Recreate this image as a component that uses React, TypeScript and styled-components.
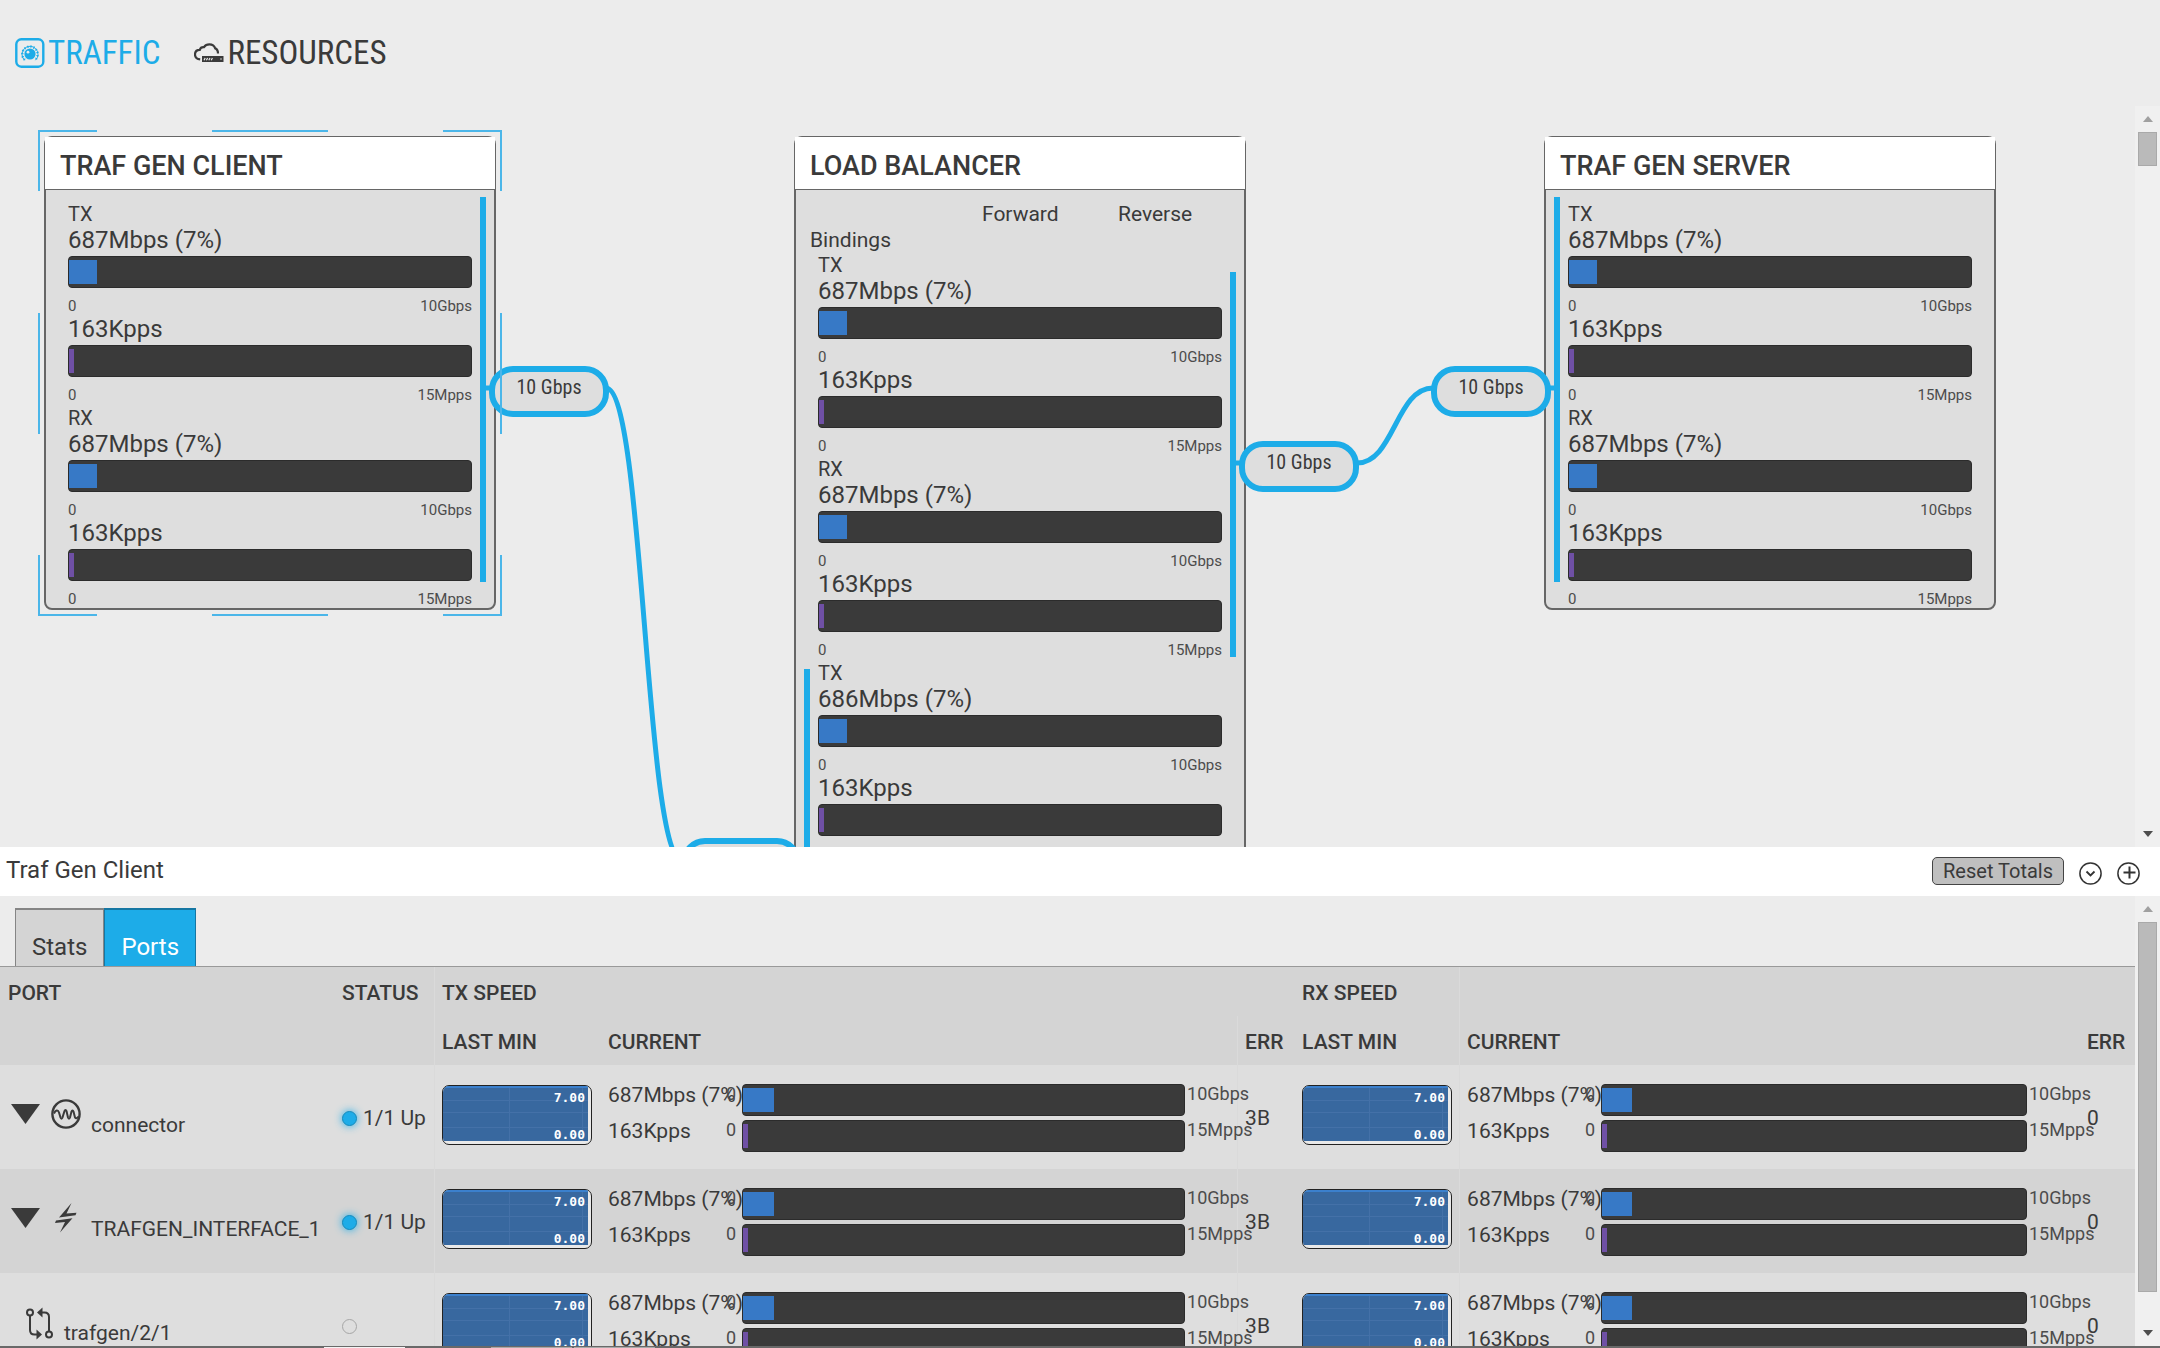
import React from "react";
import styled, { createGlobalStyle, css } from "styled-components";

const color = {
  ink: "#3a3a3a",
  blue: "#1dace8",
  page: "#ececec",
  card: "#dedede",
  band: "#d4d4d4",
  bar: "#3a3a3a",
  bits: "#3779c6",
  packets: "#6f50a5",
};

const GlobalStyle = createGlobalStyle`
  *, *::before, *::after { box-sizing: border-box; }
  body { margin: 0; background: ${color.page}; color: ${color.ink}; font-family: Roboto, "Liberation Sans", sans-serif; }
  button { font-family: inherit; color: inherit; }
`;

const Page = styled.div`
  display: flex;
  flex-direction: column;
  height: 100vh;
  overflow: hidden;
`;

/* ---------- navigation ---------- */

const MainNav = styled.nav`
  display: flex;
  align-items: center;
  gap: 34px;
  flex: none;
  height: 106px;
  padding-left: 15px;
`;

const NavLink = styled.a<{ $active?: boolean }>`
  display: flex;
  align-items: center;
  gap: 3px;
  font-family: "Roboto Condensed", Roboto, sans-serif;
  font-size: 33px;
  line-height: 40px;
  text-decoration: none;
  text-transform: uppercase;
  color: ${p => (p.$active ? color.blue : color.ink)};
  svg { display: block; }
`;

function TrafficIcon() {
  return (
    <svg width="30" height="30" viewBox="0 0 30 30" fill="none" aria-hidden="true">
      <rect x="1.3" y="1.3" width="27" height="27.4" rx="5" stroke="currentColor" strokeWidth="2.4" />
      <circle cx="15" cy="16" r="5.6" fill="currentColor" />
      <circle cx="13" cy="14.2" r="1.4" fill="#ececec" />
      <path d="M9.6 22.2A8 8 0 1 1 20.4 22.2" stroke="currentColor" strokeWidth="1" />
      <path d="M9.8 21.9A7.7 7.7 0 1 1 20.2 21.9" stroke="currentColor" strokeWidth="2.4" strokeDasharray="1.2 1.9" />
    </svg>
  );
}

function ResourcesIcon() {
  return (
    <svg width="30" height="20" viewBox="0 0 30 20" fill="none" aria-hidden="true">
      <path d="M6.2 16.4C2.6 16 1 14 1 11.4C1 8.6 3 6.8 5.8 6.8C6.4 4.8 8 4 10 4.2C11.4 2 13.4 1.4 15.4 1.4C18.6 1.4 20.4 3 21.2 5.4C23 6 24 7.6 24 10.6" stroke="currentColor" strokeWidth="2.2" />
      <rect x="8" y="13" width="21.5" height="6" fill="currentColor" />
      <path d="M10 17.2l1.2-2.2M12.4 17.2l1.2-2.2M14.8 17.2l1.2-2.2M17.2 17.2l1.2-2.2M26.2 16h1.6" stroke="#ececec" strokeWidth="1.2" />
    </svg>
  );
}

/* ---------- scroll gutter ---------- */

const Gutter = styled.div`
  display: flex;
  flex-direction: column;
  align-items: center;
  flex: none;
  width: 25px;
  background: #f0f0f0;
`;

const GutterArrow = styled.div<{ $down?: boolean; $tone: string }>`
  display: flex;
  align-items: center;
  justify-content: center;
  flex: none;
  height: 26px;
  &::before {
    content: "";
    border: 5px solid transparent;
    ${p =>
      p.$down
        ? css`border-top: 6px solid ${p.$tone}; border-bottom: 0;`
        : css`border-bottom: 6px solid ${p.$tone}; border-top: 0;`}
  }
`;

const GutterTrack = styled.div`
  flex: 1;
  min-height: 0;
  width: 19px;
`;

const GutterThumb = styled.div<{ $size: number }>`
  height: ${p => p.$size}%;
  background: #bababa;
  border: 1px solid #a9a9a9;
`;

function ScrollGutter({ size }: { size: number }) {
  return (
    <Gutter aria-hidden="true">
      <GutterArrow $tone="#a0a0a0" />
      <GutterTrack>
        <GutterThumb $size={size} />
      </GutterTrack>
      <GutterArrow $down $tone="#4d4d4d" />
    </Gutter>
  );
}

/* ---------- meters ---------- */

const BarTrack = styled.div`
  height: 32px;
  padding: 3px 0;
  border: 1px solid #2b2b2b;
  border-radius: 4px;
  background: ${color.bar};
`;

const BarFill = styled.div<{ $kind: Kind }>`
  height: 100%;
  min-width: 5px;
  background: ${p => color[p.$kind]};
`;

type Kind = "bits" | "packets";

function Bar({ kind }: { kind: Kind }) {
  const value = kind === "bits" ? 7 : 1;
  return (
    <BarTrack role="progressbar" aria-valuenow={value} aria-valuemin={0} aria-valuemax={100} aria-label={kind}>
      <BarFill $kind={kind} style={{ width: `${value}%` }} />
    </BarTrack>
  );
}

const Direction = styled.div`
  height: 26px;
  font-size: 20px;
  line-height: 24px;
`;

const Reading = styled.div`
  height: 28px;
  font-size: 24px;
  line-height: 24px;
`;

const Scale = styled.div`
  display: flex;
  justify-content: space-between;
  height: 29px;
  padding-top: 8px;
  color: #4c4c4c;
  font-size: 15px;
  line-height: 20px;
`;

function Meter({ kind, reading }: { kind: Kind; reading: string }) {
  return (
    <div>
      <Reading>{reading}</Reading>
      <Bar kind={kind} />
      <Scale>
        <span>0</span>
        <span>{kind === "bits" ? "10Gbps" : "15Mpps"}</span>
      </Scale>
    </div>
  );
}

function Flow({ name, bits }: { name: string; bits: string }) {
  return (
    <section>
      <Direction>{name}</Direction>
      <Meter kind="bits" reading={bits} />
      <Meter kind="packets" reading="163Kpps" />
    </section>
  );
}

/* ---------- topology canvas ---------- */

const TopologyRow = styled.div`
  display: flex;
  flex: 741 1 0;
  min-height: 0;
`;

const Canvas = styled.main`
  position: relative;
  flex: 1;
  overflow: hidden;
`;

const Node = styled.article<{ $x: number }>`
  position: absolute;
  left: ${p => p.$x}px;
  top: 30px;
  width: 452px;
  border: 2px solid #666;
  border-top-width: 1px;
  border-radius: 8px;
  background: ${color.card};
`;

const NodeTitle = styled.h2`
  height: 53px;
  margin: 0 -1px;
  padding: 10px 15px 0;
  border-bottom: 1px solid #666;
  background: #fff;
  font-size: 27px;
  font-weight: 500;
  line-height: 38px;
  text-transform: uppercase;
`;

const NodeBody = styled.div`
  margin-bottom: -2px;
  padding: 12px 22px 0;
`;

const Bindings = styled.div`
  display: grid;
  grid-template-columns: 2fr 136px 104px;
  row-gap: 2px;
  margin: 0 0 1px -8px;
  font-size: 21px;
  line-height: 24px;
`;

const Rail = styled.div<{ $side: "left" | "right"; $y: number }>`
  position: absolute;
  top: ${p => p.$y}px;
  ${p => p.$side}: 8px;
  width: 6px;
  height: 385px;
  background: ${color.blue};
`;

const Overlay = styled.svg`
  position: absolute;
  left: 0;
  top: 0;
  width: 100%;
  height: 100%;
  fill: none;
  stroke: ${color.blue};
  stroke-width: 5;
`;

const Selection = styled.svg`
  position: absolute;
  left: 37px;
  top: 23px;
  fill: none;
  stroke: #4bb6e9;
  stroke-width: 2;
`;

const Pill = styled.div<{ $x: number; $y: number }>`
  position: absolute;
  left: ${p => p.$x}px;
  top: ${p => p.$y}px;
  width: 120px;
  height: 51px;
  border: 6px solid ${color.blue};
  border-radius: 24px;
  background: ${color.card};
  font-family: "Roboto Condensed", Roboto, sans-serif;
  font-size: 20px;
  line-height: 30px;
  text-align: center;
`;

function Topology() {
  return (
    <TopologyRow>
      <Canvas>
        <Node $x={44}>
          <NodeTitle>Traf Gen Client</NodeTitle>
          <NodeBody>
            <Flow name="TX" bits="687Mbps (7%)" />
            <Flow name="RX" bits="687Mbps (7%)" />
          </NodeBody>
          <Rail $side="right" $y={60} />
        </Node>
        <Node $x={794}>
          <NodeTitle>Load Balancer</NodeTitle>
          <NodeBody>
            <Bindings>
              <span />
              <span>Forward</span>
              <span>Reverse</span>
              <span>Bindings</span>
            </Bindings>
            <Flow name="TX" bits="687Mbps (7%)" />
            <Flow name="RX" bits="687Mbps (7%)" />
            <Flow name="TX" bits="686Mbps (7%)" />
          </NodeBody>
          <Rail $side="right" $y={135} />
          <Rail $side="left" $y={532} />
        </Node>
        <Node $x={1544}>
          <NodeTitle>Traf Gen Server</NodeTitle>
          <NodeBody>
            <Flow name="TX" bits="687Mbps (7%)" />
            <Flow name="RX" bits="687Mbps (7%)" />
          </NodeBody>
          <Rail $side="left" $y={60} />
        </Node>
        <Overlay aria-hidden="true">
          <path d="M484 282H492M606 282C644 282 645 754 682 754" />
          <path d="M1234 357H1242M1357 357C1394 357 1396 282 1433 282M1549 282H1556" />
        </Overlay>
        <Pill $x={489} $y={260}>10 Gbps</Pill>
        <Pill $x={1239} $y={335}>10 Gbps</Pill>
        <Pill $x={1431} $y={260}>10 Gbps</Pill>
        <Pill $x={681} $y={732} />
        <Selection width="466" height="488" viewBox="0 0 466 488" aria-hidden="true">
          <path d="M60 2H2V62M175 2H291M406 2H464V62M2 184V305M464 184V305M2 426V486H60M175 486H291M406 486H464V426" />
        </Selection>
      </Canvas>
      <ScrollGutter size={5} />
    </TopologyRow>
  );
}

/* ---------- detail header ---------- */

const DetailBar = styled.header`
  display: flex;
  align-items: flex-end;
  flex: none;
  height: 49px;
  padding: 0 20px 11px 6px;
  background: #fff;
`;

const DetailTitle = styled.h1`
  flex: 1;
  margin: 0 0 1px;
  font-size: 24px;
  font-weight: 400;
  line-height: 28px;
`;

const ResetButton = styled.button`
  height: 28px;
  padding: 0 10px;
  border: 1px solid #444;
  border-radius: 5px;
  background: #bfbfbf;
  font-size: 20px;
  line-height: 26px;
`;

const RoundButton = styled.button`
  width: 23px;
  height: 23px;
  margin-left: 15px;
  padding: 0;
  border: 0;
  background: none;
  svg { display: block; fill: none; stroke: #333; }
`;

/* ---------- ports panel ---------- */

const PanelRow = styled.div`
  display: flex;
  flex: 450 1 0;
  min-height: 0;
`;

const Panel = styled.div`
  flex: 1;
  min-width: 0;
  overflow: hidden;
`;

const Tabs = styled.div`
  display: flex;
  height: 71px;
  padding: 12px 0 0 15px;
  border-bottom: 1px solid #999;
`;

const Tab = styled.button<{ $active?: boolean }>`
  padding: 18px 16px 0;
  border: 1px solid ${p => (p.$active ? "#1577a3" : "#858585")};
  border-width: 2px 1px 0;
  background: ${p => (p.$active ? color.blue : color.band)};
  color: ${p => (p.$active ? "#fff" : color.ink)};
  font-size: 24px;
  line-height: 28px;
`;

const PortTable = styled.table`
  width: 100%;
  table-layout: fixed;
  border-collapse: collapse;
  font-size: 21px;
  line-height: 22px;
`;

const Col = styled.col<{ $w?: string }>`
  width: ${p => p.$w || "auto"};
`;

const HeadCell = styled.th<{ $line?: boolean }>`
  height: 49px;
  padding: 2px 0 0 8px;
  font-weight: 500;
  text-align: left;
  white-space: nowrap;
  text-transform: uppercase;
  background: ${color.band};
  box-shadow: ${p => (p.$line ? "inset 1px 0 #dadada" : "none")};
`;

const Row = styled.tr`
  background: ${color.card};
  &:nth-child(even) { background: ${color.band}; }
`;

const Cell = styled.td<{ $top: number; $line?: boolean }>`
  height: 104px;
  padding: ${p => p.$top}px 0 0 8px;
  vertical-align: top;
  white-space: nowrap;
  box-shadow: ${p => (p.$line ? "inset 1px 0 #dadada" : "none")};
`;

const PortName = styled.div<{ $leaf?: boolean }>`
  display: flex;
  gap: 10px;
  padding-left: ${p => (p.$leaf ? 18 : 3)}px;
  svg { flex: none; display: block; }
  span { margin-top: 15px; }
`;

const Toggle = styled.button`
  width: 30px;
  height: 30px;
  padding: 5px 0;
  border: 0;
  background: none;
`;

const Status = styled.div`
  display: flex;
  align-items: center;
  gap: 6px;
  height: 22px;
`;

const Dot = styled.i<{ $up: boolean }>`
  width: 15px;
  height: 15px;
  border: 1px solid ${p => (p.$up ? "#168abb" : "#a6a6a6")};
  border-radius: 50%;
  background: ${p => (p.$up ? color.blue : "transparent")};
  box-shadow: ${p => (p.$up ? `0 0 9px ${color.blue}` : "none")};
`;

const ChartFrame = styled.div`
  width: 150px;
  height: 60px;
  border: 1px solid #222;
  border-radius: 7px;
  background: #e9e9e9;
  overflow: hidden;
  svg { display: block; }
  text { fill: #fff; font: 700 13px "DejaVu Sans Mono", monospace; text-anchor: end; }
`;

const Current = styled.div`
  display: grid;
  grid-template-columns: 134px 1fr 52px;
  row-gap: 4px;
`;

const Limit = styled.span`
  padding-left: 2px;
  color: #4c4c4c;
  font-size: 18px;
  line-height: 20px;
`;

const BarSlot = styled.div`
  position: relative;
`;

const Zero = styled.span`
  position: absolute;
  right: 100%;
  top: 0;
  padding-right: 6px;
  color: #4c4c4c;
  font-size: 18px;
  line-height: 20px;
`;

function History() {
  return (
    <ChartFrame>
      <svg width="145" height="55" viewBox="0 0 145 55" role="img" aria-label="Last minute">
        <rect width="145" height="55" fill="#38689f" />
        <path d="M0 14.5H145M0 26.5H145M0 41.5H145M66.5 0V55M139.5 0V55" stroke="#4471a8" />
        <path d="M0 1H145" stroke="#3b80cd" strokeWidth="2" />
        <text x="142" y="16">7.00</text>
        <text x="142" y="53">0.00</text>
      </svg>
    </ChartFrame>
  );
}

function CurrentSpeed() {
  return (
    <Current>
      <span>687Mbps (7%)</span>
      <BarSlot>
        <Zero>0</Zero>
        <Bar kind="bits" />
      </BarSlot>
      <Limit>10Gbps</Limit>
      <span>163Kpps</span>
      <BarSlot>
        <Zero>0</Zero>
        <Bar kind="packets" />
      </BarSlot>
      <Limit>15Mpps</Limit>
    </Current>
  );
}

function ConnectorIcon() {
  return (
    <svg width="30" height="30" viewBox="0 0 30 30" fill="none" stroke="currentColor" aria-hidden="true">
      <circle cx="15" cy="15" r="13.6" strokeWidth="2.4" />
      <path d="M3 14.5C4.5 11 7 10.5 8 13.5L9.5 18.5C10 20 11 20 11.5 18.5L13.5 12C14 10.5 15 10.5 15.5 12L17 18.5C17.5 20 18.5 20 19 18.5L20.5 12.5C21 11 22 11 22.5 12.5L24 18.5C24.5 19.8 26 19.5 27.5 17.5" strokeWidth="2" />
    </svg>
  );
}

function InterfaceIcon() {
  return (
    <svg width="30" height="30" viewBox="0 0 30 30" fill="currentColor" aria-hidden="true">
      <path d="M20.5 0L8 14.5L24.5 12.2L25.5 9.8L15.5 10.6Z" />
      <path d="M9 29.5L21.5 15.2L5 17.5L4 19.9L14 19.1Z" />
    </svg>
  );
}

function PortIcon() {
  return (
    <svg width="28" height="34" viewBox="0 0 28 34" fill="none" stroke="currentColor" strokeWidth="2" aria-hidden="true">
      <circle cx="4" cy="5.5" r="3" />
      <path d="M4 8.5V23Q4 27.5 8.5 27.5H11" />
      <path d="M10.5 22.5L16 27.5L10.5 32.5Z" fill="currentColor" stroke="none" />
      <circle cx="23" cy="27.5" r="3" />
      <path d="M23 24.5V10Q23 5.5 18.500 5.5H16" />
      <path d="M16.5 0.5L11 5.5L16.5 10.5Z" fill="currentColor" stroke="none" />
    </svg>
  );
}

const ports = [
  { name: "connector", status: "1/1 Up", icon: <ConnectorIcon /> },
  { name: "TRAFGEN_INTERFACE_1", status: "1/1 Up", icon: <InterfaceIcon /> },
  { name: "trafgen/2/1", status: "", icon: <PortIcon /> },
];

function Ports() {
  return (
    <PanelRow>
      <Panel>
        <Tabs role="tablist">
          <Tab role="tab" aria-selected="false">Stats</Tab>
          <Tab role="tab" aria-selected="true" $active>Ports</Tab>
        </Tabs>
        <PortTable>
          <colgroup>
            <Col $w="334px" />
            <Col $w="100px" />
            <Col $w="166px" />
            <Col $w="29.84%" />
            <Col $w="57px" />
            <Col $w="165px" />
            <Col />
            <Col $w="56px" />
          </colgroup>
          <thead>
            <tr>
              <HeadCell>Port</HeadCell>
              <HeadCell>Status</HeadCell>
              <HeadCell $line colSpan={3}>TX Speed</HeadCell>
              <HeadCell>RX Speed</HeadCell>
              <HeadCell $line colSpan={2} />
            </tr>
            <tr>
              <HeadCell />
              <HeadCell />
              <HeadCell $line>Last Min</HeadCell>
              <HeadCell>Current</HeadCell>
              <HeadCell $line>Err</HeadCell>
              <HeadCell>Last Min</HeadCell>
              <HeadCell $line>Current</HeadCell>
              <HeadCell>Err</HeadCell>
            </tr>
          </thead>
          <tbody>
            {ports.map(port => (
              <Row key={port.name}>
                <Cell $top={34}>
                  <PortName $leaf={!port.status}>
                    {port.status && (
                      <Toggle aria-label={`Collapse ${port.name}`}>
                        <svg width="30" height="20" viewBox="0 0 30 20" aria-hidden="true">
                          <path d="M0 0H29L14.5 20Z" fill={color.ink} />
                        </svg>
                      </Toggle>
                    )}
                    {port.icon}
                    <span>{port.name}</span>
                  </PortName>
                </Cell>
                <Cell $top={42}>
                  <Status>
                    <Dot $up={!!port.status} />
                    {port.status}
                  </Status>
                </Cell>
                <Cell $top={20} $line><History /></Cell>
                <Cell $top={19}><CurrentSpeed /></Cell>
                <Cell $top={42} $line>3B</Cell>
                <Cell $top={20}><History /></Cell>
                <Cell $top={19} $line><CurrentSpeed /></Cell>
                <Cell $top={42}>0</Cell>
              </Row>
            ))}
          </tbody>
        </PortTable>
      </Panel>
      <ScrollGutter size={93} />
    </PanelRow>
  );
}

/* ---------- bottom edge ---------- */

const BottomEdge = styled.footer`
  display: flex;
  align-items: flex-end;
  flex: none;
  gap: 2px;
  height: 2px;
  padding-left: 324px;
  background: #696969;
`;

const EdgeTab = styled.i<{ $tone: string; $gap?: number }>`
  width: 81px;
  height: 1px;
  margin-right: ${p => p.$gap || 0}px;
  background: ${p => p.$tone};
`;

export default function App() {
  return (
    <Page>
      <GlobalStyle />
      <MainNav>
        <NavLink href="#traffic" $active><TrafficIcon />Traffic</NavLink>
        <NavLink href="#resources"><ResourcesIcon />Resources</NavLink>
      </MainNav>
      <Topology />
      <DetailBar>
        <DetailTitle>Traf Gen Client</DetailTitle>
        <ResetButton>Reset Totals</ResetButton>
        <RoundButton aria-label="Collapse">
          <svg width="23" height="23" viewBox="0 0 23 23" aria-hidden="true">
            <circle cx="11.5" cy="11.5" r="10.6" strokeWidth="1.5" />
            <path d="M7.500 9.5L11.5 13.5L15.5 9.5" strokeWidth="1.8" />
          </svg>
        </RoundButton>
        <RoundButton aria-label="Add">
          <svg width="23" height="23" viewBox="0 0 23 23" aria-hidden="true">
            <circle cx="11.5" cy="11.5" r="10.6" strokeWidth="1.5" />
            <path d="M12.5 4.5V16.5M6.5 10.5H18.5" strokeWidth="2" />
          </svg>
        </RoundButton>
      </DetailBar>
      <Ports />
      <BottomEdge>
        <EdgeTab $tone="#f4f4f4" $gap={84} />
        <EdgeTab $tone="#a9a9a9" />
        <EdgeTab $tone="#a9a9a9" />
      </BottomEdge>
    </Page>
  );
}
